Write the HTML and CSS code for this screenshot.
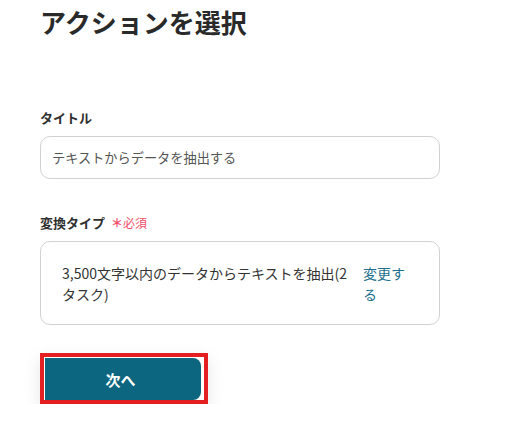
FILE: index.html
```html
<!DOCTYPE html>
<html lang="ja">
<head>
<meta charset="utf-8">
<title>アクションを選択</title>
<link rel="stylesheet" href="styles.css">
</head>
<body>
<main class="page">
  <h1 class="title">アクションを選択</h1>
  <section class="field field-title">
    <label class="label">タイトル</label>
    <div class="input">テキストからデータを抽出する</div>
  </section>
  <section class="field field-type">
    <label class="label">変換タイプ<span class="req"><span class="star">＊</span>必須</span></label>
    <div class="select">
      <span class="select-text">3,500文字以内のデータからテキストを抽出(2タスク)</span>
      <a class="change" href="#">変更する</a>
    </div>
  </section>
  <div class="actions">
    <div class="highlight">
      <button class="next">次へ</button>
    </div>
  </div>
</main>
</body>
</html>
```
FILE: styles.css
```css
html, body {
  margin: 0;
  padding: 0;
  background: #ffffff;
}
body {
  font-family: "Noto Sans CJK JP", "Noto Sans", sans-serif;
  color: #333333;
}
.page {
  padding: 4px 0 0 40px;
  width: 400px;
}
.title {
  margin: 0;
  font-size: 26px;
  line-height: 36px;
  font-weight: 700;
  color: #2a2a2a;
}
.field-title {
  margin-top: 68px;
}
.label {
  display: block;
  font-size: 13px;
  line-height: 20px;
  font-weight: 700;
  color: #2f2f2f;
}
.input {
  margin-top: 8px;
  height: 41px;
  border: 1px solid #d2d2d6;
  border-radius: 10px;
  padding: 0 11px;
  font-size: 13.2px;
  line-height: 41px;
  color: #555555;
}
.field-type {
  margin-top: 34px;
}
.req {
  margin-left: 6px;
  color: #f0506a;
  font-size: 12px;
  font-weight: 400;
}
.star {
  font-weight: 700;
}
.select {
  margin-top: 8px;
  border: 1px solid #d2d2d6;
  border-radius: 10px;
  padding: 21px 28px 19px 21px;
  display: flex;
  gap: 8px;
  font-size: 14px;
  line-height: 21px;
  color: #333333;
}
.select-text {
  flex: 1;
}
.change {
  width: 48px;
  flex: none;
  color: #1e6f8c;
  text-decoration: none;
}
.actions {
  margin-top: 28px;
}
.highlight {
  display: block;
  width: 158px;
  border: 4px solid #e41f22;
  padding: 1px 1px 0 1px;
  box-shadow: 0 6px 16px rgba(0, 0, 0, 0.1);
}
.next {
  display: block;
  width: 156px;
  height: 42px;
  border: none;
  border-radius: 0 8px 8px 0;
  padding: 0 5px 0 0;
  background: #0c6680;
  color: #ffffff;
  font-family: inherit;
  font-size: 15px;
  font-weight: 700;
}
```
